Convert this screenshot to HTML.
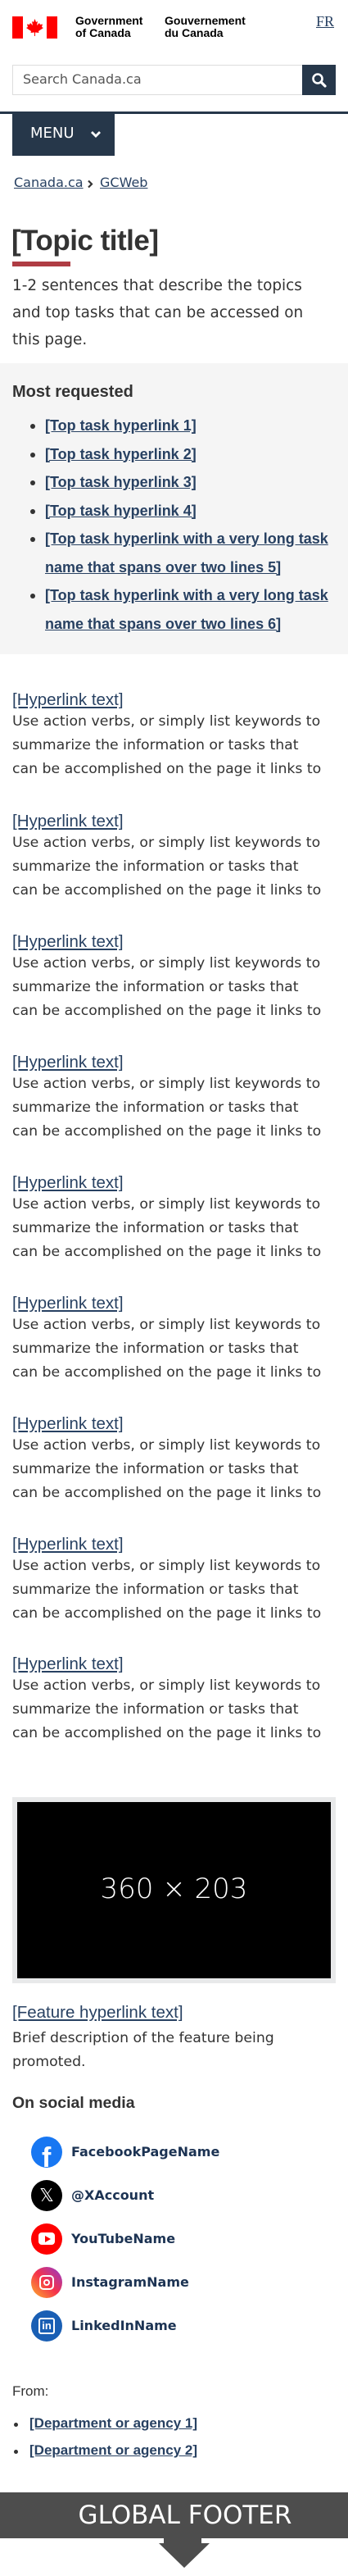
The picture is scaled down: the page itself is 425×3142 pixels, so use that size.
<!DOCTYPE html>
<html><head><meta charset="utf-8"><style>
*{margin:0;padding:0;box-sizing:border-box}
body{width:425px;height:3142px;position:relative;background:#fff;font-family:"Liberation Sans",sans-serif;color:#333;overflow:hidden}
.a{position:absolute}
a,.lk{color:#284162;text-decoration:underline}
.blk{position:absolute;left:15px;width:410px}
.blk .l{font-size:20.5px;line-height:24px;color:#284162;text-decoration:underline;display:block}
.blk p{font-family:"DejaVu Sans",sans-serif;font-size:17.3px;line-height:29px;color:#333;white-space:nowrap}
ul.mr{list-style:none}
ul.mr li{position:relative;font-size:18px;line-height:34.5px;padding-left:40px;font-weight:bold;white-space:nowrap}
ul.mr li:before{content:"";position:absolute;left:22px;top:15px;width:6px;height:6px;border-radius:3px;background:#333}
.soc{position:absolute;left:38px;width:38px;height:38px;border-radius:19px}
.st{position:absolute;left:87px;font-family:"DejaVu Sans",sans-serif;font-size:16px;font-weight:bold;color:#1c3353}
</style></head><body>
<div class="a" style="left:15px;top:20px;width:13px;height:27px;background:#f00"></div>
<div class="a" style="left:57px;top:20px;width:13px;height:27px;background:#f00"></div>
<svg class="a" style="left:31px;top:22px" width="23" height="23" viewBox="0 0 23 23"><path d="M11.5 1 L13 5 L15 4 L14 9 L17 6 L18 8 L21 7.5 L20 11 L22 12 L16 16 L16.5 18 L12 17.5 L12 22 L11 22 L11 17.5 L6.5 18 L7 16 L1 12 L3 11 L2 7.5 L5 8 L6 6 L9 9 L8 4 L10 5 Z" fill="#f00"/></svg>
<div class="a" style="left:92px;top:18px;font-size:14px;line-height:15px;font-weight:bold;color:#000">Government<br>of Canada</div>
<div class="a" style="left:201px;top:18px;font-size:14px;line-height:15px;font-weight:bold;color:#000">Gouvernement<br>du Canada</div>
<div class="a" style="left:386px;top:16px;font-size:18px;color:#284162;text-decoration:underline;font-family:'Liberation Serif',serif">FR</div>
<div class="a" style="left:15px;top:79px;width:356px;height:37px;border:1px solid #ddd"></div>
<div class="a" style="left:28px;top:87px;font-family:'DejaVu Sans',sans-serif;font-size:16px;color:#555">Search Canada.ca</div>
<div class="a" style="left:369px;top:79px;width:41px;height:37px;background:#26374a"></div>
<svg class="a" style="left:380px;top:88px" width="20" height="20" viewBox="0 0 20 20"><circle cx="8" cy="8" r="5.5" fill="none" stroke="#fff" stroke-width="2.6"/><path d="M12 12 L17 17" stroke="#fff" stroke-width="3.2" stroke-linecap="round"/></svg>
<div class="a" style="left:0;top:136px;width:425px;height:3px;background:#26374a"></div>
<div class="a" style="left:15px;top:139px;width:125px;height:51px;background:#26374a"></div>
<div class="a" style="left:37px;top:152px;font-family:'DejaVu Sans',sans-serif;font-size:18px;color:#fff">MENU</div>
<svg class="a" style="left:110px;top:159px" width="14" height="10" viewBox="0 0 14 10"><path d="M2 2 L7 7 L12 2" fill="none" stroke="#fff" stroke-width="2.8"/></svg>
<div class="a" style="left:17px;top:213px;font-family:'DejaVu Sans',sans-serif;font-size:16px"><a>Canada.ca</a></div>
<svg class="a" style="left:106px;top:219px" width="8" height="11" viewBox="0 0 8 11"><path d="M2 1.5 L6 5.5 L2 9.5" fill="none" stroke="#333" stroke-width="2.2"/></svg>
<div class="a" style="left:122px;top:213px;font-family:'DejaVu Sans',sans-serif;font-size:16px"><a>GCWeb</a></div>
<div class="a" style="left:14px;top:274px;font-size:35px;font-weight:bold;color:#333;letter-spacing:-0.5px">[Topic title]</div>
<div class="a" style="left:15px;top:319px;width:71px;height:6px;background:#af3c43"></div>
<div class="a" style="left:15px;top:332px;width:420px;font-family:'DejaVu Sans',sans-serif;font-size:18.4px;line-height:33px;color:#333;white-space:nowrap">1-2 sentences that describe the topics<br>and top tasks that can be accessed on<br>this page.</div>
<div class="a" style="left:0;top:443px;width:425px;height:355px;background:#f5f5f5"></div>
<div class="a" style="left:15px;top:467px;font-size:20px;font-weight:bold;color:#333">Most requested</div>
<ul class="mr a" style="left:15px;top:502px;width:410px">
<li><a>[Top task hyperlink 1]</a></li>
<li><a>[Top task hyperlink 2]</a></li>
<li><a>[Top task hyperlink 3]</a></li>
<li><a>[Top task hyperlink 4]</a></li>
<li><a>[Top task hyperlink with a very long task<br>name that spans over two lines 5]</a></li>
<li><a>[Top task hyperlink with a very long task<br>name that spans over two lines 6]</a></li>
</ul>
<div class="blk" style="top:842px"><span class="l">[Hyperlink text]</span><p>Use action verbs, or simply list keywords to<br>summarize the information or tasks that<br>can be accomplished on the page it links to</p></div>
<div class="blk" style="top:990px"><span class="l">[Hyperlink text]</span><p>Use action verbs, or simply list keywords to<br>summarize the information or tasks that<br>can be accomplished on the page it links to</p></div>
<div class="blk" style="top:1137px"><span class="l">[Hyperlink text]</span><p>Use action verbs, or simply list keywords to<br>summarize the information or tasks that<br>can be accomplished on the page it links to</p></div>
<div class="blk" style="top:1284px"><span class="l">[Hyperlink text]</span><p>Use action verbs, or simply list keywords to<br>summarize the information or tasks that<br>can be accomplished on the page it links to</p></div>
<div class="blk" style="top:1431px"><span class="l">[Hyperlink text]</span><p>Use action verbs, or simply list keywords to<br>summarize the information or tasks that<br>can be accomplished on the page it links to</p></div>
<div class="blk" style="top:1578px"><span class="l">[Hyperlink text]</span><p>Use action verbs, or simply list keywords to<br>summarize the information or tasks that<br>can be accomplished on the page it links to</p></div>
<div class="blk" style="top:1725px"><span class="l">[Hyperlink text]</span><p>Use action verbs, or simply list keywords to<br>summarize the information or tasks that<br>can be accomplished on the page it links to</p></div>
<div class="blk" style="top:1872px"><span class="l">[Hyperlink text]</span><p>Use action verbs, or simply list keywords to<br>summarize the information or tasks that<br>can be accomplished on the page it links to</p></div>
<div class="blk" style="top:2018px"><span class="l">[Hyperlink text]</span><p>Use action verbs, or simply list keywords to<br>summarize the information or tasks that<br>can be accomplished on the page it links to</p></div>
<div class="a" style="left:15px;top:2192px;width:395px;height:227px;background:#e8e9ea"></div>
<div class="a" style="left:21px;top:2198px;width:383px;height:215px;background:#000"></div>
<div class="a" style="left:21px;top:2284px;width:383px;text-align:center;font-family:'DejaVu Sans',sans-serif;font-size:34px;color:#fff;font-weight:200">360 × 203</div>
<div class="a" style="left:15px;top:2443px;font-size:20.5px;color:#284162;text-decoration:underline">[Feature hyperlink text]</div>
<div class="a" style="left:15px;top:2472px;width:410px;font-family:'DejaVu Sans',sans-serif;font-size:17.3px;line-height:29px;color:#333;white-space:nowrap">Brief description of the feature being<br>promoted.</div>
<div class="a" style="left:15px;top:2554px;font-size:19.5px;font-weight:bold;color:#333">On social media</div>
<div class="soc" style="top:2606px;background:#1877f2;overflow:hidden"><div style="position:absolute;left:13px;top:7px;font-size:34px;font-weight:bold;color:#fff;font-family:'Liberation Sans'">f</div></div>
<div class="st" style="top:2615px">FacebookPageName</div>
<div class="soc" style="top:2659px;background:#000;color:#fff;text-align:center;font-size:22px;line-height:38px">𝕏</div>
<div class="st" style="top:2668px">@XAccount</div>
<div class="soc" style="top:2712px;background:#f00"><div style="position:absolute;left:9px;top:11px;width:20px;height:15px;background:#fff;border-radius:4px"></div><div style="position:absolute;left:17px;top:15px;border-left:7px solid #f00;border-top:4px solid transparent;border-bottom:4px solid transparent"></div></div>
<div class="st" style="top:2721px">YouTubeName</div>
<div class="soc" style="top:2765px;background:linear-gradient(45deg,#fdb32b,#f5314b 50%,#8e3bd1)"><div style="position:absolute;left:10px;top:10px;width:18px;height:18px;border:2.5px solid #fff;border-radius:5px"></div><div style="position:absolute;left:15px;top:15px;width:8px;height:8px;border:2px solid #fff;border-radius:4px"></div></div>
<div class="st" style="top:2774px">InstagramName</div>
<div class="soc" style="top:2818px;background:#1a5fb4"><div style="position:absolute;left:9px;top:9px;width:20px;height:20px;border:2px solid #fff;border-radius:3px;color:#fff;font-size:13px;font-weight:bold;line-height:16px;text-align:center">in</div></div>
<div class="st" style="top:2827px">LinkedInName</div>
<div class="a" style="left:15px;top:2907px;font-size:17px;color:#333">From:</div>
<div class="a" style="left:17px;top:2955px;width:5px;height:5px;border-radius:3px;background:#333"></div>
<div class="a" style="left:36px;top:2946px;font-size:17px;font-weight:bold;color:#284162;text-decoration:underline">[Department or agency 1]</div>
<div class="a" style="left:17px;top:2988px;width:5px;height:5px;border-radius:3px;background:#333"></div>
<div class="a" style="left:36px;top:2979px;font-size:17px;font-weight:bold;color:#284162;text-decoration:underline">[Department or agency 2]</div>
<div class="a" style="left:0;top:3040px;width:425px;height:56px;background:#4d4d4d"></div>
<div class="a" style="left:0;top:3045px;width:452px;text-align:center;font-family:'DejaVu Sans',sans-serif;font-size:31px;color:#fff;line-height:46px">GLOBAL FOOTER</div>
<div class="a" style="left:200px;top:3096px;width:46px;height:7px;background:#4d4d4d"></div>
<div class="a" style="left:194px;top:3102px;border-top:30px solid #4d4d4d;border-left:31px solid transparent;border-right:31px solid transparent"></div>
</body></html>
